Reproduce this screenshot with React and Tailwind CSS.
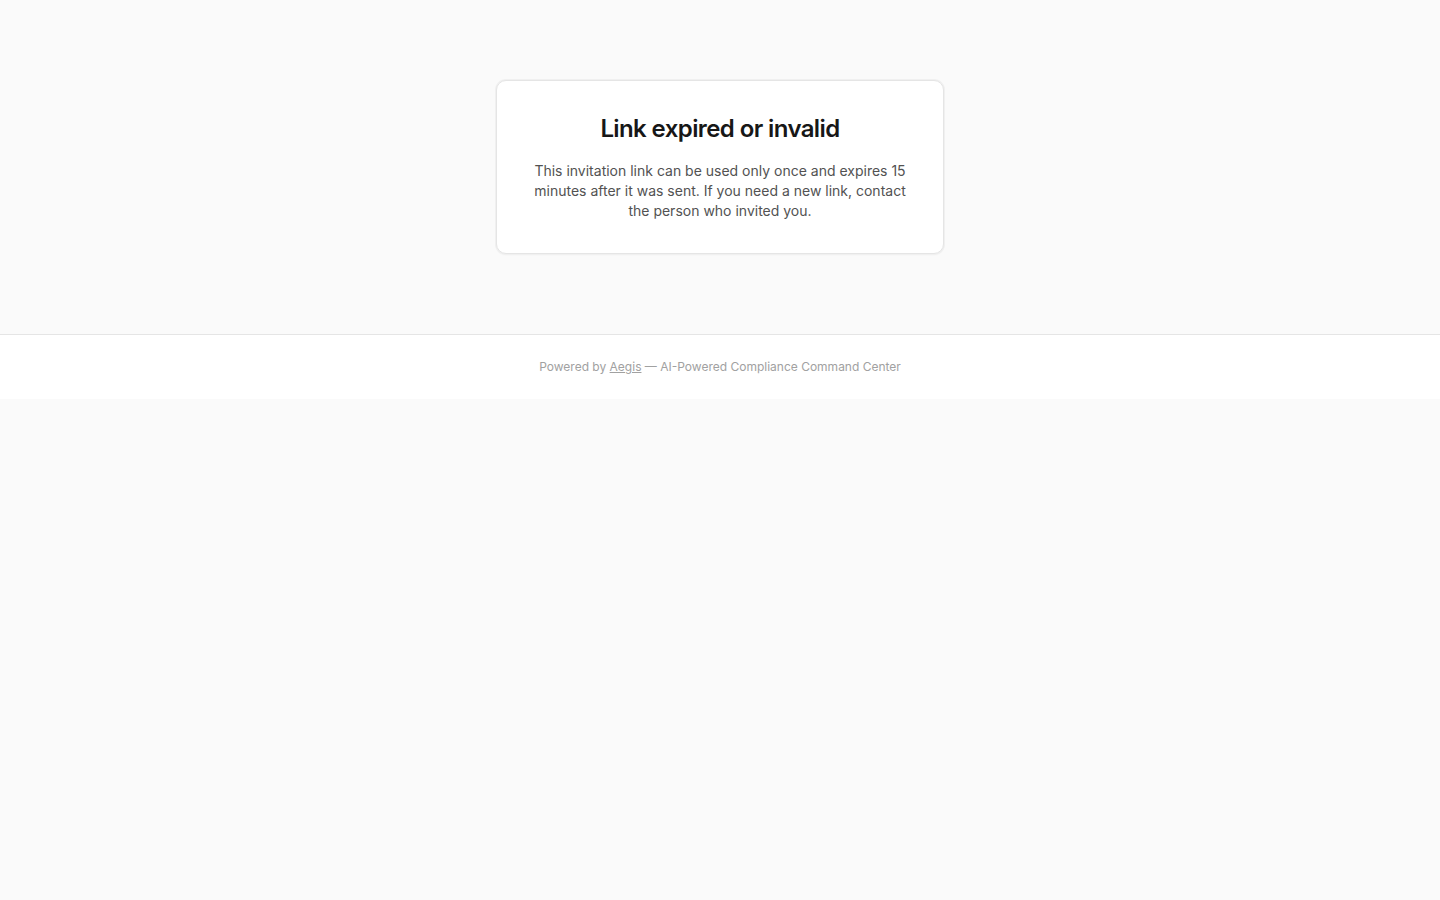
import React from 'react';

const App = () => {
    return (
        <div className="min-h-screen bg-neutral-50 font-['Inter','Noto_Sans',sans-serif]">
            <main className="flex justify-center px-4 py-20">
                <div className="w-full max-w-md rounded-[10px] border border-[#e5e5e5] bg-white p-8 text-center shadow-[0_0_0_1px_#f0f0f0,0_1px_2px_rgba(0,0,0,0.06)]">
                    <h1 className="text-2xl font-semibold tracking-tight text-neutral-900">Link expired or invalid</h1>
                    <p className="mt-4 text-sm text-neutral-600">
                        This invitation link can be used only once and expires 15 minutes after it was sent. If you need a new link, contact the person who invited you.
                    </p>
                </div>
            </main>
            <footer className="border-t border-neutral-200 bg-white py-6 text-center text-xs text-neutral-400">
                Powered by <a href="#" className="underline">Aegis</a> — AI-Powered Compliance Command Center
            </footer>
        </div>
    );
};

export default App;
